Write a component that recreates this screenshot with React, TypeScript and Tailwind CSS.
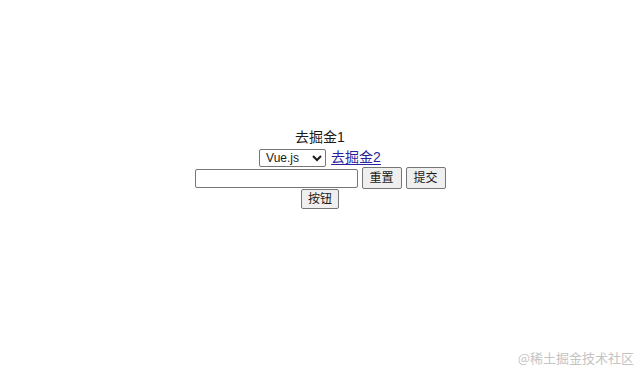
export default function App() {
  return (
    <div
      className="relative h-[370px] w-full bg-white text-[#1a1a1a]"
      style={{ fontFamily: '"Liberation Sans", "Noto Sans CJK SC", sans-serif' }}
    >
      <div className="flex flex-col items-center pt-[127px] text-[14px]">
        <div className="flex h-[21px] items-center">去掘金1</div>
        <div className="flex h-[19px] items-center gap-[5px]">
          <select
            defaultValue="vue"
            className="h-[18px] w-[67px] rounded-[2px] border border-[#767676] bg-white pl-[2px] text-[12px] leading-none"
          >
            <option value="vue">Vue.js</option>
            <option value="react">React</option>
          </select>
          <a href="#" className="text-[#2c1fa0] underline underline-offset-2">
            去掘金2
          </a>
        </div>
        <div className="flex h-[22px] items-center gap-[4px]">
          <input
            type="text"
            className="h-[19px] w-[163px] rounded-[2px] border border-[#767676] bg-white px-[2px] text-[12px]"
          />
          <button className="h-[22px] w-[40px] rounded-[2px] border border-[#767676] bg-[#efefef] text-[12px]">
            重置
          </button>
          <button className="h-[22px] w-[40px] rounded-[2px] border border-[#767676] bg-[#efefef] text-[12px]">
            提交
          </button>
        </div>
        <div className="flex h-[20px] items-center">
          <button className="h-[20px] w-[38px] rounded-[2px] border border-[#767676] bg-[#efefef] text-[12px]">
            按钮
          </button>
        </div>
      </div>
      <div
        className="absolute bottom-[6px] right-[6px] text-[13px] leading-none text-[#c4c4c4]"
        style={{ fontFamily: '"Noto Sans CJK SC", sans-serif' }}
      >
        @稀土掘金技术社区
      </div>
    </div>
  );
}
